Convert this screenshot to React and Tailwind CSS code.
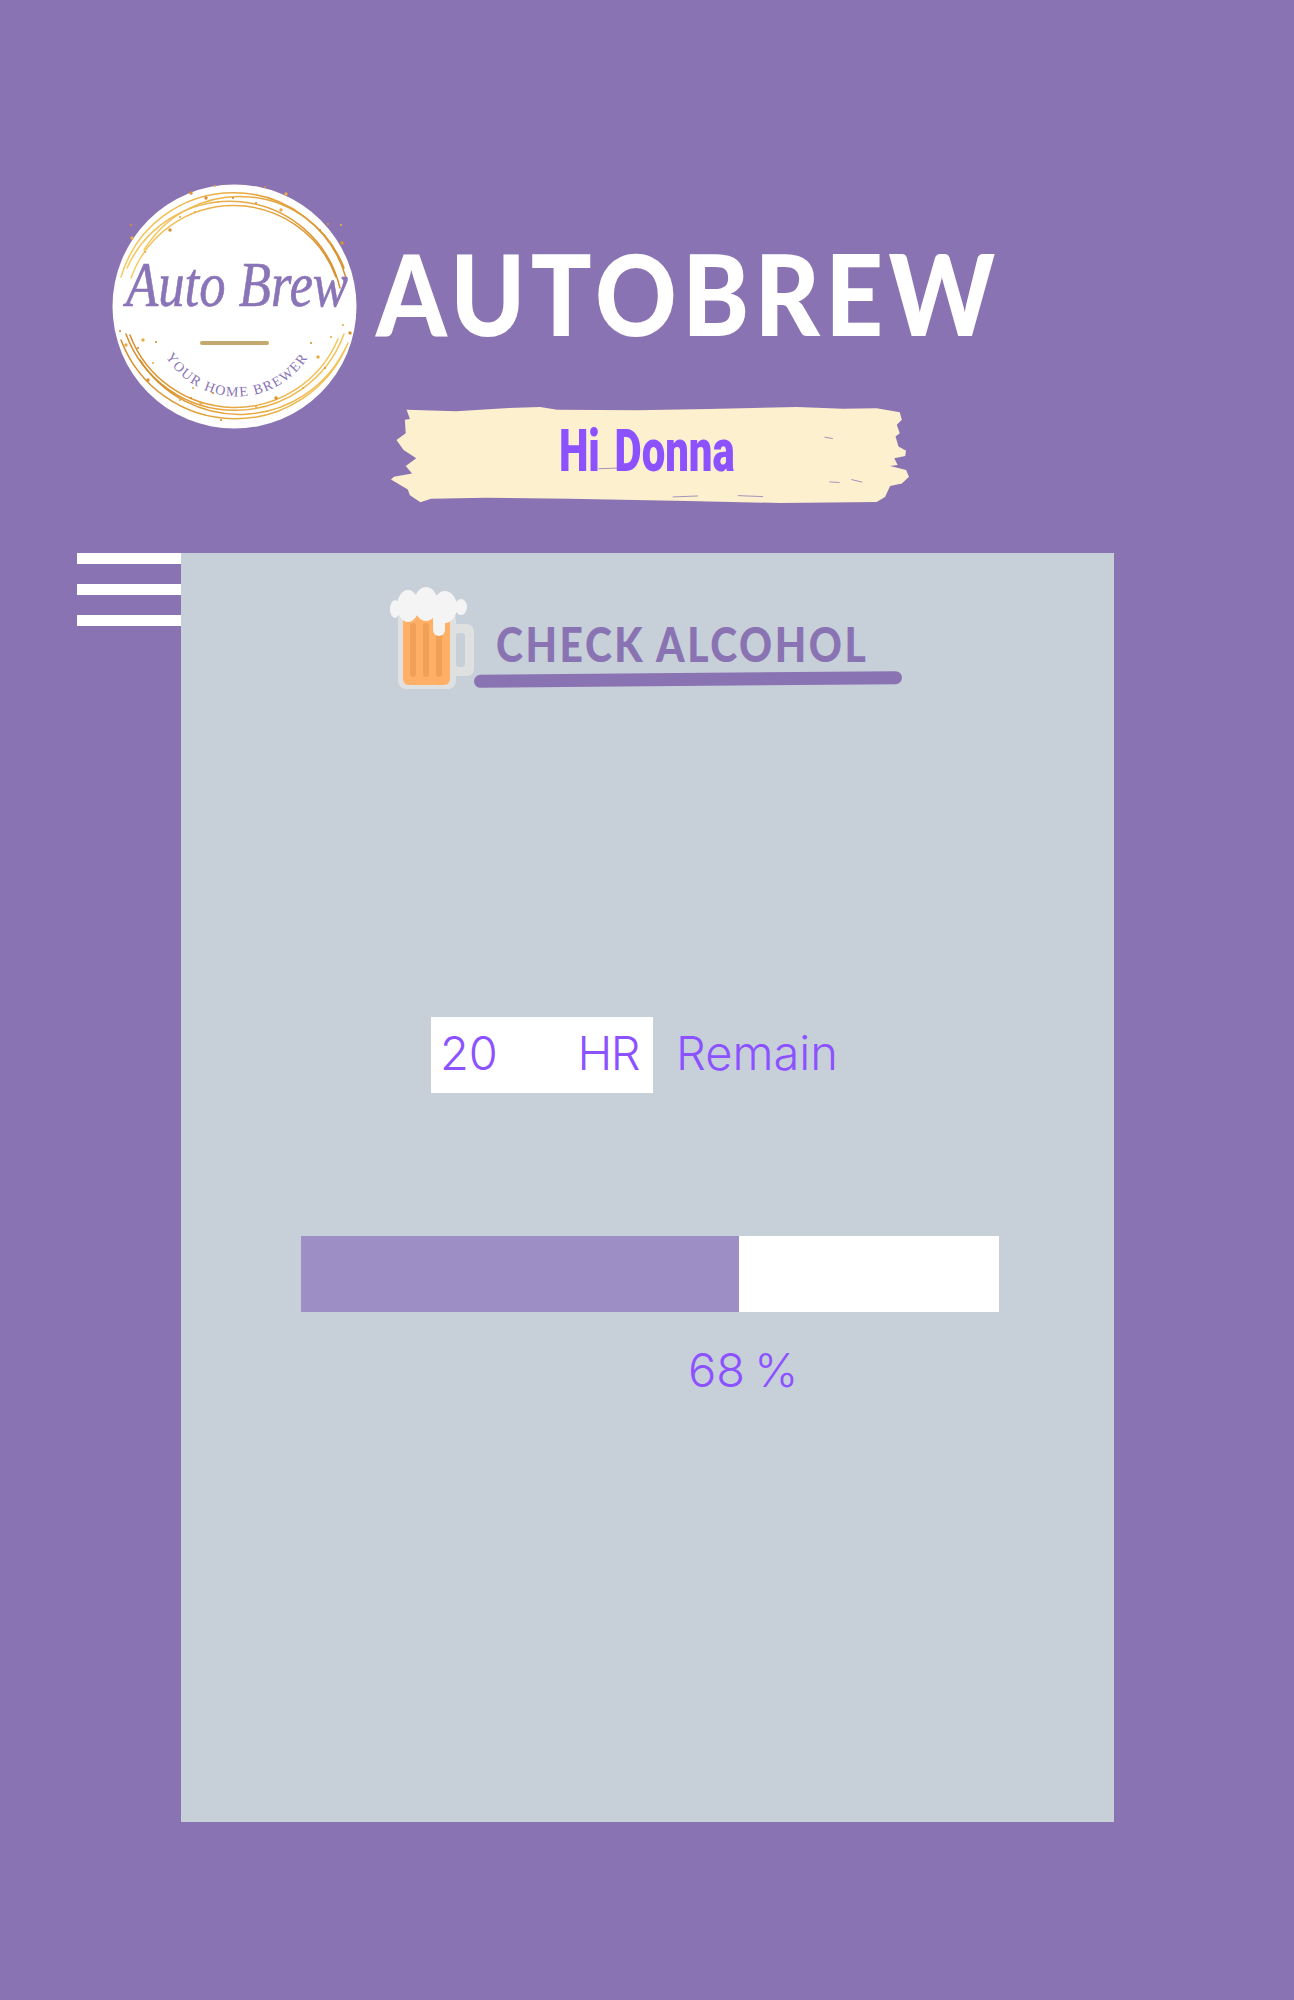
import React from 'react';

const topRings = [
    'M9 93A117 117 0 0 1 234 94',
    'M15 84A113 113 0 0 1 228 104',
    'M19 94A109 109 0 0 1 224 93',
    'M32 66A112 112 0 0 1 232 84',
];

const bottomRings = [
    'M9 156A122 122 0 0 0 236 159',
    'M18 151A112 112 0 0 0 226 155',
    'M14 150A116 116 0 0 0 232 150',
    'M28 176A118 118 0 0 0 233 165',
];

const dots = [
    [79, 9], [103, 2], [153, 3], [174, 10], [144, 19], [83, 28], [58, 46], [33, 68], [19, 41], [20, 54],
    [216, 40], [229, 41], [230, 59], [218, 58], [208, 46], [169, 26], [121, 14], [106, 18], [94, 14], [68, 33],
    [8, 147], [14, 161], [26, 164], [41, 179], [36, 196], [68, 216], [79, 214], [89, 219], [109, 236], [144, 223],
    [164, 214], [191, 204], [213, 184], [206, 173], [199, 159], [231, 141], [238, 149], [219, 153], [44, 158], [31, 156],
    [101, 209], [81, 204],
];

const Logo = () => (
    <svg viewBox="0 0 245 245" className="w-[245px] h-[245px] shrink-0 overflow-visible">
        <defs>
            <linearGradient id="ring-top" x1="0" y1="0" x2="1" y2="0">
                <stop offset="0" stopColor="#f7c95f" />
                <stop offset="1" stopColor="#d98f2c" />
            </linearGradient>
            <linearGradient id="ring-bottom" x1="0" y1="0" x2="1" y2="0">
                <stop offset="0" stopColor="#d68c2b" />
                <stop offset="1" stopColor="#f6c557" />
            </linearGradient>
        </defs>
        <circle cx="122.5" cy="122.5" r="122" fill="#ffffff" />
        {topRings.map((d, i) => (
            <path key={i} d={d} fill="none" stroke="url(#ring-top)" strokeWidth="1.5" strokeLinecap="round" />
        ))}
        {bottomRings.map((d, i) => (
            <path key={i} d={d} fill="none" stroke="url(#ring-bottom)" strokeWidth="1.5" strokeLinecap="round" />
        ))}
        {dots.map(([x, y], i) => (
            <circle key={i} cx={x} cy={y} r={i % 3 === 0 ? 1.7 : 1.1} fill={i % 2 ? '#e9ad47' : '#d8912e'} />
        ))}
        <text
            x="125"
            y="122"
            textAnchor="middle"
            textLength="222"
            lengthAdjust="spacingAndGlyphs"
            fontFamily="'Liberation Serif', serif"
            fontStyle="italic"
            fontSize="64"
            fill="#8a74b8"
            stroke="#8a74b8"
            strokeWidth="0.6"
        >
            Auto Brew
        </text>
        <rect x="88" y="157" width="69" height="4" rx="2" fill="#c4a86e" />
        <path id="logo-tagline" d="M52 170A84 84 0 0 0 198 170" fill="none" />
        <text fontFamily="'Liberation Serif', serif" fontSize="14" letterSpacing="1.5" fill="#8a74b8">
            <textPath href="#logo-tagline" startOffset="50%" textAnchor="middle">YOUR HOME BREWER</textPath>
        </text>
    </svg>
);

const brushPoints = '112,570 230,575 355,565 430,562 470,570 660,572 830,568 1040,562 1150,567 1230,566 1285,578 1290,600 1278,615 1285,640 1275,650 1282,680 1300,692 1298,708 1272,715 1280,735 1262,738 1300,750 1307,770 1290,790 1262,797 1250,830 1230,845 1000,848 780,842 500,835 300,832 170,835 145,846 120,825 115,808 75,778 82,770 125,760 110,738 135,715 105,690 88,660 110,640 108,600 120,598';

const Greeting = () => (
    <div className="relative w-[518px] h-[96px] ml-[15px] mt-[64px] pb-[10px] flex items-center justify-center">
        <svg viewBox="75 562 1232 286" preserveAspectRatio="none" className="absolute inset-0 w-full h-full">
            <polygon points={brushPoints} fill="#fdf0cf" />
            <path d="M1106 652l20 4M1170 778l26 8M1118 785l24 2M745 830l60-3M900 826l60 3M568 746l45-2" stroke="#8a73b2" strokeWidth="2" fill="none" />
        </svg>
        <span className="relative -ml-[6px] font-['Roboto',sans-serif] font-black text-[59px] leading-none text-[#8c52ff] scale-x-[0.71] [word-spacing:6px] whitespace-nowrap">
            Hi Donna
        </span>
    </div>
);

const BeerMug = () => (
    <svg viewBox="0 0 84 102" className="w-[84px] h-[102px] shrink-0">
        <rect x="60" y="37" width="24" height="52" rx="7" fill="#dfe0e0" />
        <rect x="66" y="46" width="9" height="34" rx="3" fill="#c7cfd9" />
        <rect x="8" y="24" width="58" height="78" rx="8" fill="#dfe0e0" />
        <rect x="13" y="24" width="47" height="74" rx="6" fill="#ffb066" />
        <rect x="20" y="36" width="6" height="54" rx="3" fill="#f0a059" />
        <rect x="33" y="36" width="6" height="54" rx="3" fill="#f0a059" />
        <rect x="46" y="36" width="6" height="54" rx="3" fill="#f0a059" />
        <g fill="#f4f4f4">
            <ellipse cx="5" cy="22" rx="5" ry="9" />
            <ellipse cx="18" cy="19" rx="11" ry="16" />
            <ellipse cx="36" cy="17" rx="12" ry="17" />
            <ellipse cx="55" cy="20" rx="12" ry="16" />
            <ellipse cx="71" cy="20" rx="6" ry="8" />
            <rect x="10" y="14" width="54" height="14" />
            <rect x="43" y="20" width="12" height="29" rx="6" />
        </g>
    </svg>
);

const App = () => {
    return (
        <div className="w-full min-h-[2000px] bg-[#8a73b2] pt-[184px] font-['Inter',sans-serif]">
            {/* header: logo on the left, title and greeting stacked next to it */}
            <div className="flex items-start pl-[112px]">
                <Logo />
                <div className="ml-[19px] flex flex-col">
                    <h1 className="h-[100px] mt-[59px] font-['Lato',sans-serif] font-black text-[112px] leading-[100px] tracking-[6px] origin-left scale-x-[0.9] text-white whitespace-nowrap">
                        AUTOBREW
                    </h1>
                    <Greeting />
                </div>
            </div>

            <div className="flex items-start mt-[50px] pl-[77px]">
                <div className="w-[104px] flex flex-col gap-[20px] shrink-0">
                    <div className="h-[11px] bg-white" />
                    <div className="h-[11px] bg-white" />
                    <div className="h-[11px] bg-white" />
                </div>

                <main className="w-[933px] h-[1269px] bg-[#c7cfd9] pt-[34px]">
                    <div className="flex items-start pl-[209px]">
                        <BeerMug />
                        <div className="pt-[32px]">
                            <h2 className="ml-[22px] h-[50px] font-['Lato',sans-serif] font-black text-[48px] leading-[50px] tracking-[3px] origin-left scale-x-[0.85] text-[#8a73b2] whitespace-nowrap">
                                CHECK ALCOHOL
                            </h2>
                            <div className="w-[428px] h-[13px] mt-[4px] rounded-full bg-[#8a73b2] -rotate-[0.5deg]" />
                        </div>
                    </div>

                    <div className="flex items-center mt-[328px] ml-[250px] text-[47px] font-light leading-none text-[#8c52ff]">
                        <div className="w-[222px] h-[76px] bg-white flex items-center justify-between pl-[9px] pr-[14px] pb-[5px]">
                            <span>20</span>
                            <span className="tracking-[-1.5px]">HR</span>
                        </div>
                        <span className="ml-[23px] mb-[5px]">Remain</span>
                    </div>

                    <div className="flex w-[698px] h-[76px] mt-[143px] ml-[120px] bg-white">
                        <div className="w-[438px] bg-[#9d8ec5]" />
                    </div>

                    <div className="mt-[30px] ml-[507px] text-[47px] font-light leading-[56px] [word-spacing:-4px] text-[#8c52ff]">68 %</div>
                </main>
            </div>
        </div>
    );
};

export default App;
